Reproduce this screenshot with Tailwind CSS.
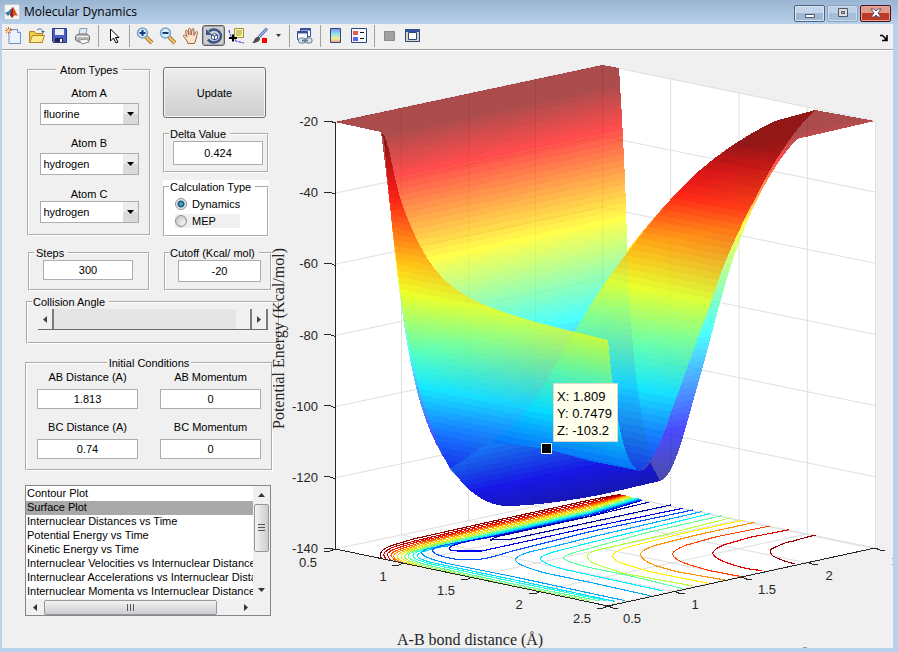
<!DOCTYPE html>
<html lang="en">
<head>
  <meta charset="UTF-8">
  <title>Molecular Dynamics</title>
  <script src="https://cdn.jsdelivr.net/npm/@tailwindcss/browser@4"></script>
</head>
<body class="min-h-screen flex flex-col bg-[#b9d1ea] font-['Liberation_Sans',Arial,sans-serif] text-[11px] leading-[14px] text-black">

  <!-- title bar -->
  <header class="h-6 shrink-0 flex items-center pl-1 pr-[7px] bg-linear-to-b from-[#9ab5d2] to-[#b9d1ea]">
    <svg class="w-4 h-4 mr-1" viewBox="0 0 16 16">
      <path d="M0 0h16v16H0z" fill="#f4f4f4" stroke="#8fa3b8"/>
      <path d="M1 9l4-2 2 2-3 3z" fill="#3c7ab5"/>
      <path d="M5 7l4-4-2 6z" fill="#2f4f7f"/>
      <path d="M9 3c2 2 3 6 5 9-2-1-3-1-4 0l-2 2-2-3z" fill="#d9541e"/>
      <path d="M9 3L6 11l2 3 1-2z" fill="#8e2212"/>
    </svg>
    <h1 class="grow font-['Open_Sans','Noto_Sans',sans-serif] text-[12px]">Molecular Dynamics</h1>
    <div class="flex gap-[2px] pt-0.5">
      <button aria-label="Minimize" class="w-[31px] h-[17px] rounded-[2px] border border-[#4d6482] bg-linear-to-b from-[#c3d5e8] from-50% to-[#9db9d6] to-50% grid place-items-center shadow-[inset_0_0_0_1px_#dbe7f3]">
        <svg class="w-3 h-3" viewBox="0 0 12 12"><path d="M1.5 7.5h9v3h-9z" fill="#fff" stroke="#535666"/></svg>
      </button>
      <button aria-label="Maximize" class="w-[31px] h-[17px] rounded-[2px] border border-[#8ba3bf] bg-linear-to-b from-[#bcd0e6] from-50% to-[#a5bfdb] to-50% grid place-items-center shadow-[inset_0_0_0_1px_#cbdcec]">
        <svg class="w-3 h-3" viewBox="0 0 12 12"><path d="M1.5 1.500h9v8h-9z" fill="#ddd" stroke="#535666"/><path d="M4.500 4.500h3v2h-3z" fill="#9db9d6" stroke="#535666"/></svg>
      </button>
      <button aria-label="Close" class="w-[31px] h-[17px] rounded-[2px] border border-[#431422] bg-linear-to-b from-[#e29a8c] from-50% to-[#bf3a26] to-50% grid place-items-center shadow-[inset_0_0_0_1px_#e8a598]">
        <svg class="w-3 h-3" viewBox="0 0 12 12"><path d="M1 2h3l2 2 2-2h3L8 6l3 4H8L6 8l-2 2H1l3-4z" fill="#fff" stroke="#535666"/></svg>
      </button>
    </div>
  </header>

  <div class="grow flex flex-col ml-0.5 mr-[5px] mb-1 bg-[#f0f0f0]">

    <!-- toolbar -->
    <nav class="h-[27px] shrink-0 flex items-center pb-[3px] border-b border-white shadow-[inset_0_-1px_0_#a0a0a0]">
      <button aria-label="New figure" class="w-[23px] grid place-items-center">
        <svg class="w-[18px] h-[18px]" viewBox="0 0 18 18">
          <path d="M4 2.500h8.500l3 3v11H4z" fill="#eaf3fd" stroke="#7391bd"/><path d="M12.500 2.500v3h3" fill="#fff" stroke="#7391bd"/>
          <path d="M1 1l5 5M6 1L1 6M3.500 0v7M0 3.500h7" stroke="#d9643a"/><circle cx="3.500" cy="3.500" r="1.500" fill="#fbd27a"/>
        </svg>
      </button>
      <button aria-label="Open" class="w-[23px] grid place-items-center">
        <svg class="w-[18px] h-[18px]" viewBox="0 0 18 18">
          <path d="M1.500 15.500v-11h5l1 2h7v9z" fill="#f3c94a" stroke="#b3891d"/>
          <path d="M1.500 15.500l3-7h12l-2.500 7z" fill="#fdeb90" stroke="#b3891d"/>
          <path d="M9 3c3-2 5-1 6 1" fill="none" stroke="#4a6c9b"/><path d="M13 4h4l-2 2.500z" fill="#4a6c9b"/>
        </svg>
      </button>
      <button aria-label="Save" class="w-[23px] grid place-items-center">
        <svg class="w-[18px] h-[18px]" viewBox="0 0 18 18">
          <path d="M1.500 1.500h14v14h-13l-1-1z" fill="#4a5dc0" stroke="#2a3a86"/>
          <path d="M4 2h9v6H4z" fill="#e8ecf8"/><path d="M4 11h8v4H4z" fill="#1d2450"/><path d="M9 12h2v3H9z" fill="#fff"/>
        </svg>
      </button>
      <button aria-label="Print" class="w-[23px] grid place-items-center">
        <svg class="w-[18px] h-[18px]" viewBox="0 0 18 18">
          <path d="M5 8l1-6.500h7L12 8z" fill="#dbe9fb" stroke="#8b9bb3"/>
          <path d="M1.500 9l3-2h8l3 2v4l-3 2h-8l-3-2z" fill="#b9b9b9" stroke="#6c6c6c"/>
          <path d="M2 9.500h13" stroke="#eee"/><path d="M5 13l8-1 2 3-7 2z" fill="#f8f8f8" stroke="#8b8b8b"/>
        </svg>
      </button>
      <span class="w-2 h-[22px] grid place-items-center"><span class="w-px h-full bg-[#a0a0a0]"></span></span>
      <button aria-label="Edit plot" class="w-[23px] grid place-items-center">
        <svg class="w-[18px] h-[18px]" viewBox="0 0 18 18"><path d="M5.500 2v12l3-3 2.500 5 2-1-2.500-4.500H14z" fill="#fff" stroke="#000"/></svg>
      </button>
      <span class="w-2 h-[22px] grid place-items-center"><span class="w-px h-full bg-[#a0a0a0]"></span></span>
      <button aria-label="Zoom in" class="w-[23px] grid place-items-center">
        <svg class="w-[18px] h-[18px]" viewBox="0 0 18 18">
          <path d="M10 10l6 6" stroke="#a87a35" stroke-width="4"/><path d="M10 10l6 6" stroke="#f5c56b" stroke-width="2"/>
          <circle cx="6.500" cy="6" r="5" fill="#d5edfb" stroke="#7ba2c8" stroke-width="1.500"/><path d="M3.500 6h6M6.500 3v6" stroke="#183a7a" stroke-width="2"/>
        </svg>
      </button>
      <button aria-label="Zoom out" class="w-[23px] grid place-items-center">
        <svg class="w-[18px] h-[18px]" viewBox="0 0 18 18">
          <path d="M10 10l6 6" stroke="#a87a35" stroke-width="4"/><path d="M10 10l6 6" stroke="#f5c56b" stroke-width="2"/>
          <circle cx="6.500" cy="6" r="5" fill="#d5edfb" stroke="#7ba2c8" stroke-width="1.500"/><path d="M3.500 6h6" stroke="#183a7a" stroke-width="2"/>
        </svg>
      </button>
      <button aria-label="Pan" class="w-[23px] grid place-items-center">
        <svg class="w-[18px] h-[18px]" viewBox="0 0 18 18">
          <path d="M6 16.500L4.500 13 1.500 9.500C1 8 2.500 7.500 3.500 8.500L5 10 3.500 4.500c0-1.500 1.500-1.500 2-.5L7 8 6.500 2.500C6.500 1 8.500 1 8.700 2.500L9.200 8l1-5.500C10.500 1 12 1.200 12 2.700L11.700 8.500l2-3.500c.8-1.200 2-.5 1.800.7L14 12l-1.500 4.500z" fill="#fbe3cb" stroke="#9c6640"/>
        </svg>
      </button>
      <button aria-label="Rotate 3D" class="w-[23px] h-[21px] grid place-items-center rounded-[3px] border border-[#5f5f5f] bg-[#cfcfcf] shadow-[inset_0_0_0_1px_#aaa]">
        <svg class="w-[18px] h-[18px]" viewBox="0 0 18 18">
          <path d="M4 4.500a7 6.500 0 1 1-1 8" fill="none" stroke="#3c5488" stroke-width="2.500"/><path d="M1 2v6h6z" fill="#3c5488"/>
          <path d="M6.500 8l3-1.500 3 1.500v3.500l-3 1.500-3-1.500zM6.500 8l3 1 3-1M9.500 9v4" fill="#fff" stroke="#3c5488"/>
        </svg>
      </button>
      <button aria-label="Data cursor" class="w-[23px] grid place-items-center">
        <svg class="w-[18px] h-[18px]" viewBox="0 0 18 18">
          <path d="M1 3c1 5 3 9 7 11 2 1 5 1 8 2" fill="none" stroke="#2b2bea" stroke-dasharray="3 1"/>
          <path d="M6.500 1.500h9v9h-6l-2 2-1-2z" fill="#fbf6a5" stroke="#9d9440"/><path d="M8 4h6M8 6h6M8 8h5" stroke="#a59c48"/>
          <path d="M1 11h8M5 7.500v7" stroke="#000" stroke-width="2"/>
        </svg>
      </button>
      <button aria-label="Brush" class="w-[23px] grid place-items-center">
        <svg class="w-[18px] h-[18px]" viewBox="0 0 18 18">
          <path d="M16 1.500L8 10" stroke="#5a6fb0" stroke-width="3"/><path d="M16 1.500L8 10" stroke="#d3dcf3"/>
          <path d="M1 16c2-1 2-4 4-5.500l3-1 1 2c0 3-4 4.500-8 4.500z" fill="#4b4b4b"/><path d="M11 11h5v5h-5z" fill="#f00"/>
        </svg>
      </button>
      <button aria-label="Brush options" class="w-[14px] grid place-items-center">
        <svg class="w-[5px] h-[3px]" viewBox="0 0 5 3"><path d="M0 0h5L2.500 3z" fill="#333"/></svg>
      </button>
      <span class="w-2 h-[22px] grid place-items-center"><span class="w-px h-full bg-[#a0a0a0]"></span></span>
      <button aria-label="Link plot" class="w-[23px] grid place-items-center">
        <svg class="w-[18px] h-[18px]" viewBox="0 0 18 18">
          <path d="M4.500 1.500h10v8h-10z" fill="#fff" stroke="#34509a"/><path d="M4 2.500h11" stroke="#34509a" stroke-width="2"/>
          <path d="M1.500 4.500h10v8h-10z" fill="#fff" stroke="#34509a"/><path d="M1 5.500h11" stroke="#34509a" stroke-width="2"/>
          <rect x="2.500" y="11" width="7" height="5" rx="2" fill="#dde6ee" stroke="#62788f"/><rect x="9" y="11" width="7" height="5" rx="2" fill="#dde6ee" stroke="#62788f"/><path d="M6 13.500h6" stroke="#62788f" stroke-width="2"/>
        </svg>
      </button>
      <span class="w-2 h-[22px] grid place-items-center"><span class="w-px h-full bg-[#a0a0a0]"></span></span>
      <button aria-label="Colorbar" class="w-[23px] grid place-items-center">
        <svg class="w-[18px] h-[18px]" viewBox="0 0 18 18">
          <defs><linearGradient id="cbar" x2="0" y2="1"><stop stop-color="#8a86ea"/><stop offset=".35" stop-color="#8adcf0"/><stop offset=".7" stop-color="#f4ee92"/><stop offset="1" stop-color="#f09a86"/></linearGradient></defs>
          <path d="M3.500 1.500h10v14h-10z" fill="url(#cbar)" stroke="#2c4880"/>
        </svg>
      </button>
      <button aria-label="Legend" class="w-[23px] grid place-items-center">
        <svg class="w-[18px] h-[18px]" viewBox="0 0 18 18">
          <path d="M1.500 1.500h15v14h-15z" fill="#f6f8fd" stroke="#2c4880"/><path d="M3 4h5v4H3z" fill="#e25c5c"/><path d="M3 10h5v4H3z" fill="#6464dc"/><path d="M10 5.500h4M10 11.500h4" stroke="#111"/>
        </svg>
      </button>
      <span class="w-2 h-[22px] grid place-items-center"><span class="w-px h-full bg-[#a0a0a0]"></span></span>
      <button aria-label="Hide plot tools" class="w-[23px] grid place-items-center">
        <svg class="w-[18px] h-[18px]" viewBox="0 0 18 18"><path d="M3.500 4.500h10v9h-10z" fill="#a0a0a0" stroke="#8a8a8a"/></svg>
      </button>
      <button aria-label="Show plot tools" class="w-[23px] grid place-items-center">
        <svg class="w-[18px] h-[18px]" viewBox="0 0 18 18">
          <path d="M1.500 2.500h14v12h-14z" fill="#d8d4c0" stroke="#2c4880"/><path d="M1 3.500h15" stroke="#34509a" stroke-width="3"/><path d="M4.500 5.500h8v7h-8z" fill="#fff" stroke="#2c4880"/>
        </svg>
      </button>
      <button aria-label="Dock figure" class="ml-auto mr-[5px] mt-1 grid place-items-center">
        <svg class="w-2 h-2" viewBox="0 0 8 8"><path d="M0 1.500h2.500L6 5M7 1v5.500H2" fill="none" stroke="#000" stroke-width="1.600"/><path d="M3 7l4-4v4z"/></svg>
      </button>
    </nav>

    <main class="grow flex">

      <!-- settings -->
      <form class="w-[272px] shrink-0 flex flex-col pt-3 pl-[23px]">
        <div class="flex gap-3 pl-0.5">
          <fieldset class="w-[124px] h-[173px] border-2 border-white [border-style:groove] flex flex-col items-center">
            <legend class="mx-auto px-1">Atom Types</legend>
            <label for="atomA" class="mt-[9px] mb-[3px]">Atom A</label>
            <div class="relative">
              <select id="atomA" class="appearance-none w-[99px] h-[22px] pl-[3px] border border-[#abadb3] bg-white"><option>fluorine</option></select>
              <span class="absolute right-px top-px w-[15px] h-5 grid place-items-center bg-linear-to-b from-[#ececec] from-50% to-[#dadada] to-50% pointer-events-none"><svg class="w-[7px] h-1" viewBox="0 0 7 4"><path d="M0 0h7L3.500 4z"/></svg></span>
            </div>
            <label for="atomB" class="mt-[11px] mb-[3px]">Atom B</label>
            <div class="relative">
              <select id="atomB" class="appearance-none w-[99px] h-[22px] pl-[3px] border border-[#abadb3] bg-white"><option>hydrogen</option></select>
              <span class="absolute right-px top-px w-[15px] h-5 grid place-items-center bg-linear-to-b from-[#ececec] from-50% to-[#dadada] to-50% pointer-events-none"><svg class="w-[7px] h-1" viewBox="0 0 7 4"><path d="M0 0h7L3.500 4z"/></svg></span>
            </div>
            <label for="atomC" class="mt-3">Atom C</label>
            <div class="relative">
              <select id="atomC" class="appearance-none w-[99px] h-[22px] pl-[3px] border border-[#abadb3] bg-white"><option>hydrogen</option></select>
              <span class="absolute right-px top-px w-[15px] h-5 grid place-items-center bg-linear-to-b from-[#ececec] from-50% to-[#dadada] to-50% pointer-events-none"><svg class="w-[7px] h-1" viewBox="0 0 7 4"><path d="M0 0h7L3.500 4z"/></svg></span>
            </div>
          </fieldset>

          <div class="w-[106px] flex flex-col">
            <button type="button" class="mt-1 w-[103px] h-[51px] rounded-[3px] border border-[#707070] bg-linear-to-b from-[#f0f0f0] via-[#dddddd] via-50% to-[#cfcfcf] shadow-[inset_0_0_0_1px_#f6f6f6]">Update</button>
            <fieldset class="mt-[9px] h-[46px] border-2 border-white [border-style:groove] pl-2">
              <legend class="ml-[-4px] px-px pr-1"><label for="delta">Delta Value</label></legend>
              <input id="delta" value="0.424" class="block w-[90px] h-6 text-center bg-white border border-[#abadb3]">
            </fieldset>
            <div class="mt-[7px] bg-white">
              <fieldset class="h-[57px] border-2 border-white [border-style:groove] pl-[10px]">
                <legend class="ml-[-6px] px-px pr-1">Calculation Type</legend>
                <div class="flex items-center gap-[5px] h-5">
                  <input type="radio" name="calc" id="dyn" checked class="appearance-none w-3 h-3 rounded-full border border-[#8e8f8f] bg-[radial-gradient(circle,#55c3ea_0,#1b5577_3px,#e8e8e8_4px)]">
                  <label for="dyn">Dynamics</label>
                </div>
                <div class="flex items-center gap-[5px] h-[14px] w-[65px] bg-[#f0f0f0]">
                  <input type="radio" name="calc" id="mep" class="appearance-none w-3 h-3 rounded-full border border-[#8e8f8f] bg-[radial-gradient(circle_at_70%_70%,#f4f4f4_0,#cfcfcf_6px)]">
                  <label for="mep">MEP</label>
                </div>
              </fieldset>
            </div>
          </div>
        </div>

        <div class="flex gap-3.5 pl-[3px] mt-[9px]">
          <fieldset class="w-[122px] h-[45px] border-2 border-white [border-style:groove] pl-[13px]">
            <legend class="ml-[-9px] px-0.5 pr-1"><label for="steps">Steps</label></legend>
            <input id="steps" value="300" class="block w-[90px] h-5 text-center bg-white border border-[#abadb3]">
          </fieldset>
          <fieldset class="w-[108px] h-[45px] border-2 border-white [border-style:groove] pl-3">
            <legend class="ml-[-9px] px-px pr-1 whitespace-nowrap"><label for="cutoff">Cutoff (Kcal/ mol)</label></legend>
            <input id="cutoff" value="-20" class="block w-[83px] h-[22px] text-center bg-white border border-[#abadb3]">
          </fieldset>
        </div>

        <fieldset class="ml-px mt-1 w-[247px] h-[49px] border-2 border-white [border-style:groove] px-[10px]">
          <legend class="ml-[-6px] px-px pr-1"><label for="angle">Collision Angle</label></legend>
          <div class="flex h-[21px] w-[230px] border-b border-[#696969]">
            <button type="button" aria-label="Decrease" class="w-4 grid place-items-center border-r-2 border-[#7a7a7a]"><svg class="w-1 h-[7px]" viewBox="0 0 4 7"><path d="M4 0v7L0 3.500z" fill="#444"/></svg></button>
            <input id="angle" type="range" value="100" class="appearance-none grow min-w-0 bg-[#e5e5e5] [&::-webkit-slider-thumb]:appearance-none [&::-webkit-slider-thumb]:w-4 [&::-webkit-slider-thumb]:h-5 [&::-webkit-slider-thumb]:bg-[#f0f0f0] [&::-webkit-slider-thumb]:border-r-2 [&::-webkit-slider-thumb]:border-[#7a7a7a]">
            <button type="button" aria-label="Increase" class="w-4 grid place-items-center border-r-2 border-[#7a7a7a]"><svg class="w-1 h-[7px]" viewBox="0 0 4 7"><path d="M0 0v7l4-3.500z" fill="#444"/></svg></button>
          </div>
        </fieldset>

        <fieldset class="mt-3 w-[248px] h-[115px] border-2 border-white [border-style:groove] px-[10px]">
          <legend class="mx-auto px-0.5">Initial Conditions</legend>
          <div class="grid grid-cols-2 gap-x-[22px] text-center">
            <div>
              <label for="abd" class="block mb-[5px]">AB Distance (A)</label>
              <input id="abd" value="1.813" class="block w-full h-5 text-center bg-white border border-[#abadb3]">
            </div>
            <div>
              <label for="abm" class="block mb-[5px]">AB Momentum</label>
              <input id="abm" value="0" class="block w-full h-5 text-center bg-white border border-[#abadb3]">
            </div>
            <div class="mt-[11px]">
              <label for="bcd" class="block mb-[5px]">BC Distance (A)</label>
              <input id="bcd" value="0.74" class="block w-full h-5 text-center bg-white border border-[#abadb3]">
            </div>
            <div class="mt-[11px]">
              <label for="bcm" class="block mb-[5px]">BC Momentum</label>
              <input id="bcm" value="0" class="block w-full h-5 text-center bg-white border border-[#abadb3]">
            </div>
          </div>
        </fieldset>

        <div class="mt-3.5 w-[246px] grid grid-cols-[1fr_17px] border border-[#828790] bg-white">
          <select size="8" aria-label="Plot type" class="h-[112px] mt-px w-full overflow-hidden border-0 p-0 outline-none bg-white text-[11px]">
            <option class="h-[14px] min-h-0 p-0 pl-px leading-[14px]">Contour Plot</option>
            <option selected class="h-[14px] min-h-0 p-0 pl-px leading-[14px] checked:bg-[#a9a9a9] checked:text-black">Surface Plot</option>
            <option class="h-[14px] min-h-0 p-0 pl-px leading-[14px]">Internuclear Distances vs Time</option>
            <option class="h-[14px] min-h-0 p-0 pl-px leading-[14px]">Potential Energy vs Time</option>
            <option class="h-[14px] min-h-0 p-0 pl-px leading-[14px]">Kinetic Energy vs Time</option>
            <option class="h-[14px] min-h-0 p-0 pl-px leading-[14px]">Internuclear Velocities vs Internuclear Distance</option>
            <option class="h-[14px] min-h-0 p-0 pl-px leading-[14px]">Internuclear Accelerations vs Internuclear Distance</option>
            <option class="h-[14px] min-h-0 p-0 pl-px leading-[14px]">Internuclear Momenta vs Internuclear Distance</option>
          </select>
          <div class="flex flex-col items-center bg-[#f0f0f0]">
            <svg class="w-[7px] h-1 my-[7px]" viewBox="0 0 7 4"><path d="M0 4h7L3.500 0z" fill="#333"/></svg>
            <div class="w-[15px] h-12 grid place-items-center rounded-[2px] border border-[#979797] bg-linear-to-r from-[#f3f3f3] to-[#cdcdd0]">
              <svg class="w-[7px] h-2" viewBox="0 0 7 8"><path d="M0 .5h7M0 3.500h7M0 6.500h7" stroke="#555"/></svg>
            </div>
            <svg class="w-[7px] h-1 mt-auto mb-[7px]" viewBox="0 0 7 4"><path d="M0 0h7L3.500 4z" fill="#333"/></svg>
          </div>
          <div class="h-4 flex items-center bg-[#f0f0f0]">
            <svg class="w-1 h-[7px] mx-[7px]" viewBox="0 0 4 7"><path d="M4 0v7L0 3.500z" fill="#333"/></svg>
            <div class="w-[173px] h-[15px] grid place-items-center rounded-[2px] border border-[#979797] bg-linear-to-b from-[#f3f3f3] to-[#cdcdd0]">
              <svg class="w-2 h-[7px]" viewBox="0 0 8 7"><path d="M.5 0v7M3.500 0v7M6.500 0v7" stroke="#555"/></svg>
            </div>
            <svg class="w-1 h-[7px] ml-auto mr-[5px]" viewBox="0 0 4 7"><path d="M0 0v7l4-3.500z" fill="#333"/></svg>
          </div>
          <div class="bg-[#f0f0f0]"></div>
        </div>
      </form>

      <!-- surface plot -->
      <div class="grow min-w-0">
        <svg class="block w-full overflow-visible" viewBox="274 51 619 597" role="img" aria-label="Potential energy surface">
          <defs id="jets"></defs>
          <path d="M335 122L602.500 65 875.500 121V548L608 606 335 549z" fill="#fff"/>
          <g id="grid" stroke="#dedede" fill="none"></g>

          <!-- contours projected on the floor -->
          <g transform="translate(280 480) scale(.33333)" fill="none" stroke-width="3.400" shape-rendering="crispEdges" stroke-linejoin="round">
            <path stroke="#8f0000" d="M1022 43L930 60 600 132 400 177 340 195Q300 208 301 225L304 236"/>
            <path stroke="#c00000" d="M1026 45L930 65 600 137 400 184 350 198Q312 210 311 225L318 239"/>
            <path stroke="#ef1000" d="M1032 46L930 70 600 142 410 186 355 203Q322 214 322 225L332 242"/>
            <path stroke="#ff5000" d="M1038 47L930 74 600 146 420 188 365 206Q332 216 333 227L348 245"/>
            <path stroke="#ff9000" d="M1042 48L930 78 600 150 420 192 370 210Q340 218 341 229Q345 240 372 251"/>
            <path stroke="#ffd000" d="M1046 49L930 82 600 155 430 194 380 211Q348 221 352 233Q360 245 402 256"/>
            <path stroke="#e0f020" d="M1050 50L930 86 600 159 430 199 385 213Q360 222 364 233Q376 247 440 264L530 283"/>
            <path stroke="#a0ff60" d="M1056 52L930 90 600 163 440 200 392 215Q368 224 376 234Q390 248 450 262L700 317 930 362"/>
            <path stroke="#60ffa0" d="M1062 54L930 94 600 167 450 201 400 216Q378 224 388 235Q410 249 480 264L700 312 960 363"/>
            <path stroke="#20ffe0" d="M1070 55L930 97 600 170 460 202 410 216Q392 224 404 235Q420 245 480 258L700 305 980 362"/>
            <path stroke="#00e0ff" d="M1076 56L930 99 600 173 480 201 425 216Q402 226 420 236Q440 246 500 257L700 299 1005 364"/>
            <path stroke="#00a0ff" d="M1080 58L930 101 600 176 500 199 445 205Q416 216 430 225Q440 235 500 250L700 290 1035 362"/>
            <path stroke="#0050ff" d="M1083 59L930 104 620 174 520 190 480 198Q450 208 460 216Q470 228 530 238H600Q640 232 690 215L930 155 1238 90"/>
            <path stroke="#0000ef" d="M1086 61L930 108 700 157 560 184 520 196Q500 204 512 210Q520 214 560 213H605L720 188 930 142 1208 85"/>
            <path stroke="#0000a0" d="M1108 66L930 109 660 168Q632 176 632 180L690 178 930 127 1172 75"/>
            <path stroke="#00a8ff" d="M1265 95L930 172 860 190 740 218Q706 230 706 241Q715 258 800 280L930 307 1110 347"/>
            <path stroke="#00f0ff" d="M1290 101L930 188 820 216Q780 228 781 237Q790 252 860 270L930 285 1150 333"/>
            <path stroke="#60ffa0" d="M1326 107L1100 158 900 213Q850 225 850 234Q862 248 940 265L1040 285 1205 325"/>
            <path stroke="#b8ff40" d="M1354 113L1150 165 960 208Q922 218 922 229Q922 245 960 257L1030 280 1240 318"/>
            <path stroke="#fff000" d="M1388 121L1200 162 1040 202Q1000 215 997 229Q1002 245 1050 257L1110 275 1285 310"/>
            <path stroke="#ff9000" d="M1424 127L1250 165 1130 195Q1082 210 1081 224Q1085 242 1130 258L1190 275 1335 300"/>
            <path stroke="#ff4000" d="M1470 138L1310 170 1220 195Q1180 210 1177 222Q1182 240 1230 255L1290 272 1385 290"/>
            <path stroke="#e00000" d="M1528 149L1410 172 1330 195Q1298 210 1298 220Q1305 238 1360 255L1400 266 1446 272"/>
            <path stroke="#900000" d="M1608 166L1590 169 1580 172 1560 177 1540 183 1520 187 1500 195 1472 208V220L1480 229 1500 238 1520 245 1545 252"/>
          </g>

          <!-- translucent sheets, back to front -->
          <g fill-opacity=".7" shape-rendering="crispEdges">
            <path fill="url(#back)" d="M335 122L602.500 65 619 68Q625 160 627 240 630 330 637 385 645 445 660 481L600 495Q540 506 505 506 480 504 460 480 438 455 424 415C402 350 392 230 384 140L381 132z"/>
            <path fill="url(#right)" d="M660 481Q670 480 683 437L702 370 718 310 728 275Q743 228 755 204 775 162 797 139L875 121 815 110 775 121Q735 140 700 170 670 197 627 250 630 330 637 385 645 445 660 481z"/>
            <path fill="url(#wing)" d="M815 110L775 121Q735 140 700 170 660 205 605 283 580 320 558 360 525 425 490 442L547 449 590 461 640 471Q655 463 672 410L690 360 708 310 722 270Q738 230 757 195 784 140 815 110z"/>
            <path fill="url(#front)" d="M381 132C390 136 392 180 405 212 424 260 440 285 480 303 520 320 560 328 608 340L611 370 615 400Q624 466 640 471L590 461 547 449 490 442 450 469C402 380 398 260 381 132z"/>
            <path fill="url(#base)" d="M490 442L547 449 590 461 640 471Q647 469 650 462L660 481 600 495Q540 506 505 506 480 504 460 480L450 469z"/>
          </g>

          <!-- axes and ticks -->
          <g id="axes" stroke="#262626" fill="none" shape-rendering="crispEdges"></g>
          <g id="ticks" class="text-[13px]" fill="#262626"></g>
          <text x="397" y="645" class="text-[16px] font-['Liberation_Serif',serif]" fill="#262626">A-B bond distance (Å)</text>
          <text transform="translate(284 429) rotate(-90)" class="text-[16px] font-['Liberation_Serif',serif]" fill="#262626">Potential Energy (Kcal/mol)</text>

          <!-- data tip -->
          <path d="M553.500 383.500h64v58h-64z" fill="#ffffee" stroke="#d9d9cc"/>
          <g class="text-[13px]">
            <text x="557" y="401">X: 1.809</text>
            <text x="557" y="418">Y: 0.7479</text>
            <text x="557" y="435">Z: -103.2</text>
          </g>
          <path d="M541.500 443.500h10v10h-10z" fill="#000" stroke="#ffe"/>
          <path d="M803 647.500h4M892 558.500h1M892 564.500h1" stroke="#999"/>
        </svg>
      </div>
    </main>
  </div>

  <script>
    const clamp = v => Math.max(0, Math.min(1, v));
    const jet = t => [3, 2, 1].map(c => Math.round(255 * clamp(1.5 - Math.abs(4 * t - c)))).join();

    // y positions (at column x) of the jet levels: dark red, red, yellow, cyan, blue, dark blue
    const levels = [1, 0.875, 0.625, 0.375, 0.125, 0];
    const sheets = [
      { id: "back", x: 602, slope: -0.213, y: [84, 131, 223, 313, 403, 448] },
      { id: "right", x: 700, slope: -0.2, y: [150, 175, 233, 335, 425, 475] },
      { id: "wing", x: 650, slope: 0.2, y: [120, 190, 290, 390, 495, 545] },
      { id: "front", x: 500, slope: 0.2, y: [166, 222, 312, 402, 492, 537] },
      { id: "base", x: 602, slope: -0.21, y: [205, 235, 295, 385, 465, 515] }
    ];

    function yAt(t, ys) {
      let i = 0;
      while (i < 4 && t < levels[i + 1]) i++;
      return ys[i] + (levels[i] - t) / (levels[i] - levels[i + 1]) * (ys[i + 1] - ys[i]);
    }

    document.getElementById("jets").innerHTML = sheets.map(s => {
      const y0 = s.y[0], h = s.y[5] - y0, d = h / (1 + s.slope * s.slope);
      let stops = "";
      for (let i = 0; i < 60; i++) {
        const a = (yAt(1 - i / 60, s.y) - y0) / h, b = (yAt(1 - (i + 1) / 60, s.y) - y0) / h;
        const c = `rgb(${jet(1 - (i + 0.5) / 60)})`;
        stops += `<stop offset="${a}" stop-color="${c}"/><stop offset="${b}" stop-color="${c}"/>`;
      }
      return `<linearGradient id="${s.id}" gradientUnits="userSpaceOnUse" x1="${s.x}" y1="${y0}" x2="${s.x - s.slope * d}" y2="${y0 + d}">${stops}</linearGradient>`;
    }).join("");

    let grid = "", axes = `<path d="M335.500 122V549L608 606 875 548"/>`, ticks = "";
    for (let k = 0; k < 7; k++) {
      const y = k * 71.17;
      grid += `<path d="M335 ${122 + y}L602.500 ${65 + y} 875.500 ${121 + y}"/>`;
      axes += `<path d="M324 ${121 + y}h6l5 2"/>`;
      ticks += `<text x="318" y="${126 + y}" text-anchor="end">${-20 - 20 * k}</text>`;
    }
    for (let k = 0; k < 5; k++) {
      const lx = 335 + 67 * k, rx = 602.5 + 68.25 * k;
      if (k) {
        grid += `<path d="M${lx - 0.5} ${122 - 14.25 * k}v427l273 57"/>`;
        grid += `<path d="M${rx} ${65 + 14 * k}v427l-267.500 57"/>`;
      }
      axes += `<path d="M${335 + 68.25 * k} ${549 + 14.25 * k}l-5 2h-6"/>`;
      axes += `<path d="M${608 + 66.75 * k} ${606 - 14.5 * k}l5 2h5"/>`;
    }
    [["0.5", 308, 567], ["1", 383, 581], ["1.5", 446, 595], ["2", 519, 609], ["2.5", 582, 623],
     ["0.5", 632, 623], ["1", 695, 609], ["1.5", 767, 594], ["2", 829, 580]].forEach(([t, x, y]) => {
      ticks += `<text x="${x}" y="${y}" text-anchor="middle">${t}</text>`;
    });
    document.getElementById("grid").innerHTML = grid;
    document.getElementById("axes").innerHTML = axes;
    document.getElementById("ticks").innerHTML = ticks;
  </script>
</body>
</html>
